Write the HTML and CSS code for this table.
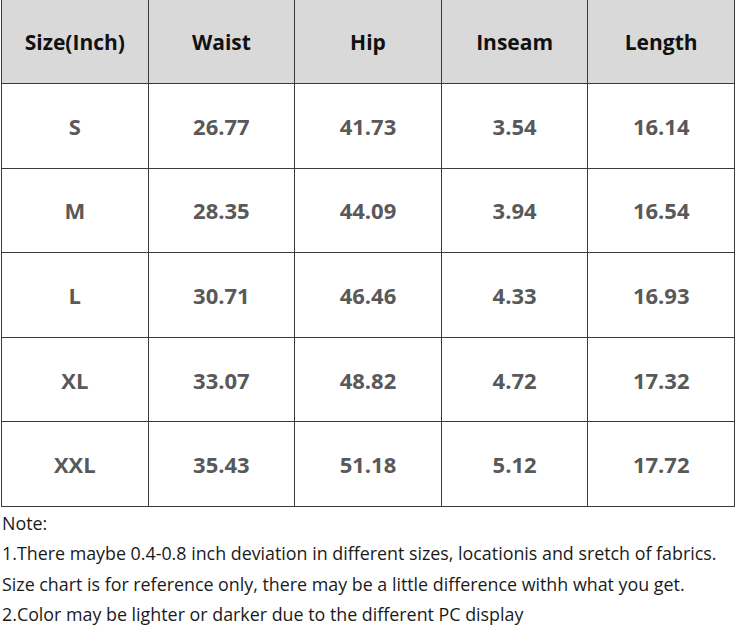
FILE: index.html
```html
<!DOCTYPE html>
<html>
<head>
<meta charset="utf-8">
<link rel="stylesheet" href="styles.css">
</head>
<body>
<table class="chart">
  <thead>
    <tr><th>Size(Inch)</th><th>Waist</th><th>Hip</th><th>Inseam</th><th>Length</th></tr>
  </thead>
  <tbody>
    <tr><td>S</td><td>26.77</td><td>41.73</td><td>3.54</td><td>16.14</td></tr>
    <tr><td>M</td><td>28.35</td><td>44.09</td><td>3.94</td><td>16.54</td></tr>
    <tr><td>L</td><td>30.71</td><td>46.46</td><td>4.33</td><td>16.93</td></tr>
    <tr><td>XL</td><td>33.07</td><td>48.82</td><td>4.72</td><td>17.32</td></tr>
    <tr><td>XXL</td><td>35.43</td><td>51.18</td><td>5.12</td><td>17.72</td></tr>
  </tbody>
</table>
<div class="notes">
  <p>Note:</p>
  <p>1.There maybe 0.4-0.8 inch deviation in different sizes, locationis and sretch of fabrics.</p>
  <p>Size chart is for reference only, there may be a little difference withh what you get.</p>
  <p>2.Color may be lighter or darker due to the different PC display</p>
</div>
</body>
</html>
```
FILE: styles.css
```css
html, body {
  margin: 0;
  padding: 0;
  background: #ffffff;
}
body {
  font-family: "Open Sans", "Noto Sans", sans-serif;
}
.chart {
  border-collapse: collapse;
  table-layout: fixed;
  width: 734px;
  margin-left: 1px;
  margin-top: -1px;
}
.chart th, .chart td {
  border: 1px solid #3a3a3a;
  text-align: center;
  font-weight: 700;
  padding: 0;
}
.chart th {
  background: #d9d9d9;
  color: #111111;
  font-size: 21px;
  height: 83px;
}
.chart td {
  color: #595959;
  font-size: 22px;
  height: 83.6px;
}
.notes {
  padding-left: 2px;
  margin-top: 1px;
  color: #1a1a1a;
  font-size: 17.85px;
}
.notes p {
  margin: 0;
  line-height: 30.5px;
}
```
